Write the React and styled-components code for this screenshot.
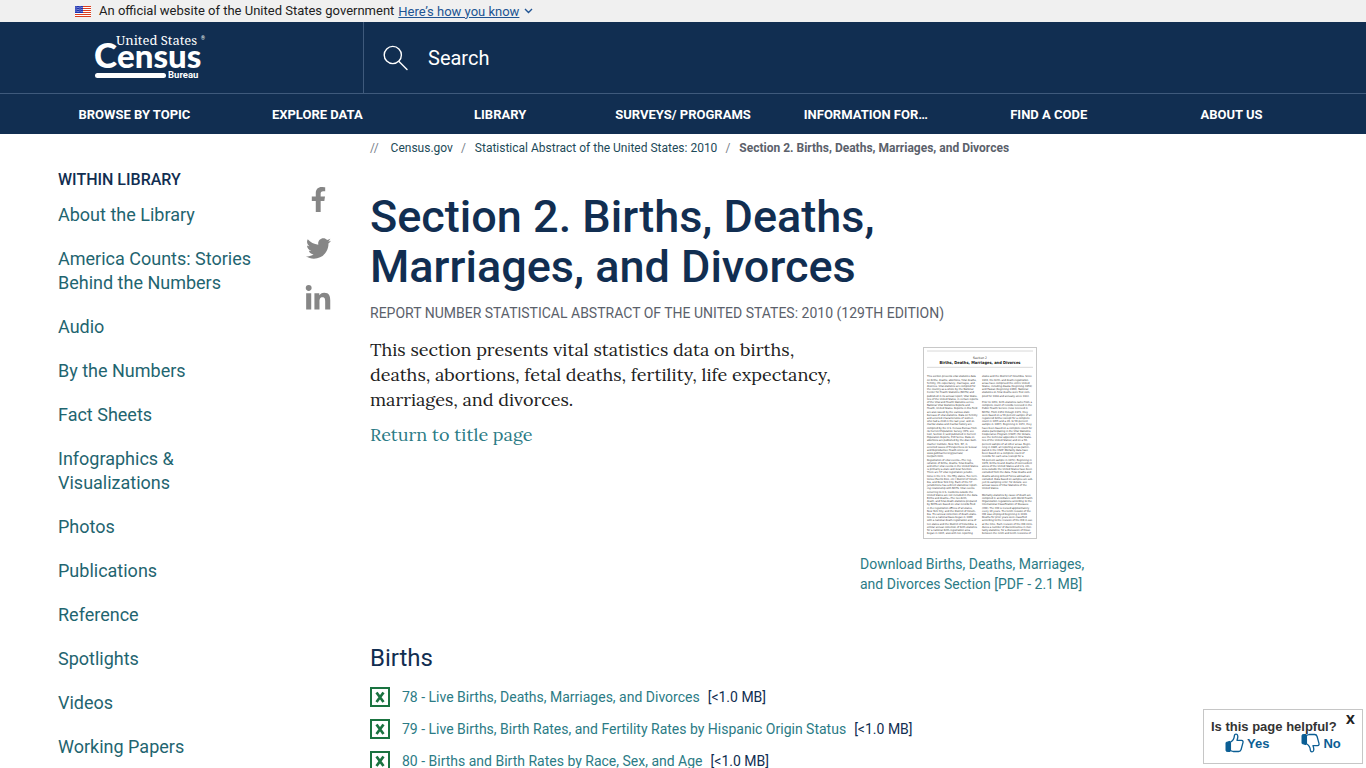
import React, { useState } from "react";
import styled, { createGlobalStyle } from "styled-components";
import { FaFacebookF, FaTwitter, FaLinkedinIn } from "react-icons/fa";

const GlobalStyle = createGlobalStyle`
  * {
    box-sizing: border-box;
  }
  body {
    margin: 0;
    background: #fff;
    color: #112e51;
    font-family: Roboto, "Liberation Sans", sans-serif;
  }
  a {
    text-decoration: none;
  }
  button {
    border: none;
    background: none;
    padding: 0;
    font-family: inherit;
    cursor: pointer;
  }
`;

const Banner = styled.div`
  display: flex;
  align-items: center;
  height: 22px;
  padding-left: 75px;
  background: #f0f0f0;
  color: #212121;
  font-size: 13px;
  line-height: 22px;
`;

const Flag = styled.svg`
  width: 16px;
  height: 11px;
  margin-right: 8px;
`;

const BannerButton = styled.button`
  display: flex;
  align-items: center;
  gap: 5px;
  margin-left: 4px;
  color: #205493;
  font-size: 13px;

  span {
    text-decoration: underline;
  }
`;

const Header = styled.header`
  background: #112e51;
  color: #fff;
`;

const HeaderTop = styled.div`
  display: flex;
  height: 72px;
  border-bottom: 1px solid #3f5a7c;
`;

const LogoLink = styled.a`
  flex: none;
  width: 364px;
  padding: 10px 0 0 90px;
  border-right: 1px solid #3f5a7c;
`;

const SearchLabel = styled.label`
  display: flex;
  flex: 1;
  align-items: center;
  gap: 20px;
  padding-left: 19px;
`;

const SearchInput = styled.input`
  flex: 1;
  padding: 0;
  border: none;
  outline: none;
  background: transparent;
  color: #fff;
  font-family: inherit;
  font-size: 20px;

  &::placeholder {
    color: #fff;
    opacity: 1;
  }
`;

const Nav = styled.nav`
  display: flex;
  height: 40px;
  padding: 0 43px;
`;

const NavLink = styled.a`
  flex: 1 1 0;
  color: #fff;
  font-size: 13px;
  font-weight: 700;
  line-height: 42px;
  text-align: center;
  white-space: nowrap;
`;

const Page = styled.div`
  display: flex;
  align-items: flex-start;
`;

const Sidebar = styled.aside`
  flex: none;
  width: 288px;
  padding: 34px 20px 0 58px;
`;

const SidebarTitle = styled.h2`
  margin: 0 0 11px;
  font-size: 16px;
  font-weight: 500;
  line-height: 24px;
`;

const SidebarList = styled.ul`
  display: flex;
  flex-direction: column;
  gap: 20px;
  margin: 0;
  padding: 0;
  list-style: none;
`;

const SidebarLink = styled.a`
  color: #1f6570;
  font-size: 18px;
  line-height: 24px;
`;

const Social = styled.div`
  display: flex;
  flex: none;
  flex-direction: column;
  align-items: center;
  gap: 24px;
  width: 60px;
  padding-top: 53px;
`;

const SocialLink = styled.a`
  display: flex;
  color: #868686;
  font-size: ${(props) => props.$size || 25}px;
`;

const Main = styled.main`
  flex: 1;
  min-width: 0;
  padding: 4px 20px 20px 22px;
`;

const Crumbs = styled.nav`
  display: flex;
  font-size: 12px;
  line-height: 20px;

  a {
    color: #1d4a59;
  }
  strong {
    color: #5b616b;
  }
`;

const Slash = styled.span`
  margin: 0 ${(props) => (props.$first ? "12px" : "9px")} 0
    ${(props) => (props.$first ? "0" : "8px")};
  color: #79818a;
`;

const Title = styled.h1`
  max-width: 600px;
  margin: 34px 0 0;
  font-size: 45px;
  font-weight: 500;
  line-height: 50px;
`;

const ReportNumber = styled.p`
  margin: 11px 0 0;
  color: #5b616b;
  font-size: 14px;
  line-height: 20px;
`;

const Intro = styled.div`
  display: flex;
  gap: 10px;
  margin-top: 14px;
`;

const IntroText = styled.div`
  flex: none;
  width: 480px;
  color: #212121;
  font-family: Lora, "Liberation Serif", serif;
  font-size: 18px;
  line-height: 25px;

  p {
    margin: 0 0 10px;
  }
  a {
    color: #2b7b85;
  }
`;

const Download = styled.a`
  display: flex;
  flex-direction: column;
  align-items: center;
  gap: 15px;
  width: 240px;
  padding-top: 10px;
  color: #2b7b85;
  font-size: 14px;
  line-height: 20px;
`;

const Thumb = styled.svg`
  width: 114px;
  height: 192px;
  border: 1px solid #c8c8c8;
`;

const SectionTitle = styled.h2`
  margin: 48px 0 7px;
  font-size: 24px;
  font-weight: 400;
  line-height: 32px;
`;

const FileList = styled.ul`
  margin: 0;
  padding: 0;
  list-style: none;
`;

const FileItem = styled.li`
  display: flex;
  align-items: center;
  height: 32px;
  font-size: 14px;

  a {
    margin: 0 8px 0 12px;
    color: #2b7b85;
  }
`;

const Survey = styled.aside`
  position: fixed;
  right: 3px;
  bottom: 4px;
  width: 160px;
  height: 55px;
  padding: 11px 0 0 7px;
  border: 1px solid #c6c6c6;
  background: #fff;
  color: #333;
  font-family: "Liberation Sans", Arial, sans-serif;
  font-size: 13px;
  font-weight: 700;
  line-height: 12px;
`;

const SurveyClose = styled.button`
  position: absolute;
  top: 2px;
  right: 7px;
  color: #222;
  font-family: "DejaVu Sans", sans-serif;
  font-size: 12px;
  font-weight: 700;
  line-height: 16px;
`;

const SurveyAnswers = styled.div`
  display: flex;
  gap: 32px;
  padding-left: 14px;
`;

const Answer = styled.button`
  display: flex;
  align-items: center;
  gap: 3px;
  color: #0b5e94;
  font-size: 13px;
  font-weight: 700;
`;

const navItems = [
  "BROWSE BY TOPIC",
  "EXPLORE DATA",
  "LIBRARY",
  "SURVEYS/ PROGRAMS",
  "INFORMATION FOR…",
  "FIND A CODE",
  "ABOUT US",
];

const libraryLinks = [
  "About the Library",
  "America Counts: Stories Behind the Numbers",
  "Audio",
  "By the Numbers",
  "Fact Sheets",
  "Infographics & Visualizations",
  "Photos",
  "Publications",
  "Reference",
  "Spotlights",
  "Videos",
  "Working Papers",
];

const files = [
  "78 - Live Births, Deaths, Marriages, and Divorces",
  "79 - Live Births, Birth Rates, and Fertility Rates by Hispanic Origin Status",
  "80 - Births and Birth Rates by Race, Sex, and Age",
];

const leftColumn = [
  "This section presents vital statistics data",
  "on births, deaths, abortions, fetal deaths,",
  "fertility, life expectancy, marriages, and",
  "divorces. Vital statistics are compiled for",
  "the country as a whole by the National",
  "Center for Health Statistics (NCHS) and",
  "published in its annual report, Vital Statis-",
  "tics of the United States, in certain reports",
  "of the Vital and Health Statistics series,",
  "National Vital Statistics Reports and",
  "Health, United States. Reports in this field",
  "are also issued by the various state",
  "bureaus of vital statistics. Data on fertility",
  "and selected characteristics of women",
  "who had a child in the last year, and on",
  "marital status and marital history are",
  "compiled by the U.S. Census Bureau from",
  "its Current Population Survey (CPS; see",
  "text, Section 1) and published in Current",
  "Population Reports, P20 Series. Data on",
  "abortions are published by the Alan Gutt-",
  "macher Institute, New York, NY, in",
  "selected issues of Perspectives on Sexual",
  "and Reproductive Health online at",
  "www.guttmacher.org/journals/",
  "toc/psrh.html.",
  "Registration of vital events—The reg-",
  "istration of births, deaths, fetal deaths,",
  "and other vital events in the United States",
  "is primarily a state and local function.",
  "There are 57 vital registration jurisdic-",
  "tions in the U.S.: the fifty states, five terri-",
  "tories (Puerto Rico, etc.) District of Colum-",
  "bia, and New York City. Each of the 57",
  "jurisdictions has a direct statistical report-",
  "ing relationship with NCHS. Vital events",
  "occurring to U.S. residents outside the",
  "United States are not included in the data.",
  "Births and deaths—The live-birth,",
  "death, and fetal-death statistics prepared",
  "by NCHS are based on vital records filed",
  "in the registration offices of all states,",
  "New York City, and the District of Colum-",
  "bia. The annual collection of death statis-",
  "tics on a national basis began in 1900",
  "with a national death-registration area of",
  "ten states and the District of Columbia; a",
  "similar annual collection of birth statistics",
  "for a national birth-registration area",
  "began in 1915, also with ten reporting",
];

const rightColumn = [
  "states and the District of Columbia. Since",
  "1933, the birth- and death-registration",
  "areas have comprised the entire United",
  "States, including Alaska (beginning 1959)",
  "and Hawaii (beginning 1960). National",
  "statistics on fetal deaths were first com-",
  "piled for 1918 and annually since 1922.",
  "",
  "Prior to 1951, birth statistics came from a",
  "complete count of records received in the",
  "Public Health Service (now received in",
  "NCHS). From 1951 through 1971, they",
  "were based on a 50-percent sample of all",
  "registered births (except for a complete",
  "count in 1955 and a 20- to 50-percent",
  "sample in 1967). Beginning in 1972, they",
  "have been based on a complete count for",
  "states participating in the Vital Statistics",
  "Cooperative Program (VSCP) (for details,",
  "see the technical appendix in Vital Statis-",
  "tics of the United States) and on a 50-",
  "percent sample of all other areas. Begin-",
  "ning in 1986, all reporting areas partici-",
  "pated in the VSCP. Mortality data have",
  "been based on a complete count of",
  "records for each area (except for a",
  "50-percent sample in 1972). Beginning in",
  "1970, births to and deaths of nonresident",
  "aliens of the United States and U.S. citi-",
  "zens outside the United States have been",
  "excluded from the data. Fetal deaths and",
  "deaths among Armed Forces abroad are",
  "excluded. Data based on samples are sub-",
  "ject to sampling error; for details, see",
  "annual issues of Vital Statistics of the",
  "United States.",
  "",
  "Mortality statistics by cause of death are",
  "compiled in accordance with World Health",
  "Organization regulations according to the",
  "International Classification of Diseases",
  "(ICD). The ICD is revised approximately",
  "every 10 years. The tenth revision of the",
  "ICD was employed beginning in 1999.",
  "Deaths for prior years were classified",
  "according to the revision of the ICD in use",
  "at the time. Each revision of the ICD intro-",
  "duces a number of discontinuities in mor-",
  "tality statistics; for a discussion of those",
  "between the ninth and tenth revisions of",
];

const FlagIcon = () => (
  <Flag viewBox="0 0 16 11" aria-hidden="true">
    <rect width="16" height="11" fill="#fff" />
    {[0, 2, 4, 6, 8, 10].map((y) => (
      <rect key={y} y={y} width="16" height="1" fill="#db3e1f" />
    ))}
    <rect width="8" height="7" fill="#1e33b1" />
    {[1, 3, 5].map((y) =>
      [1, 3, 5, 7].map((x) => (
        <circle key={`${x}-${y}`} cx={x} cy={y + (x % 4 === 1 ? 0 : 0.6)} r="0.5" fill="#fff" />
      ))
    )}
  </Flag>
);

const Logo = () => (
  <svg width="124" height="60" viewBox="0 0 124 60" fill="#fff" role="img" aria-label="United States Census Bureau">
    <text x="26" y="13" fontFamily="'Roboto Slab', 'Noto Serif', 'Liberation Serif', serif" fontSize="13">
      United States
    </text>
    <text x="111" y="8" fontFamily="Roboto, sans-serif" fontSize="5">
      ®
    </text>
    <text x="4" y="36" fontFamily="Lato, sans-serif" fontSize="33" fontWeight="900">
      <tspan fontSize="35">C</tspan>ensus
    </text>
    <rect x="5" y="41" width="71" height="5" rx="2.5" />
    <text x="78" y="46" fontFamily="Roboto, sans-serif" fontSize="9.5" fontWeight="700">
      Bureau
    </text>
  </svg>
);

const SearchIcon = () => (
  <svg width="25" height="26" viewBox="0 0 25 26" fill="none" stroke="#fff" strokeWidth="1.4" strokeLinecap="round">
    <circle cx="9.8" cy="10" r="8.6" />
    <path d="M16 16.4 24 24.6" />
  </svg>
);

const ExcelIcon = () => (
  <svg width="20" height="20" viewBox="0 0 20 20" fill="none" stroke="#1a7340" aria-hidden="true">
    <rect x="1" y="1" width="18" height="18" strokeWidth="2" />
    <path d="M6.5 5.5 13.5 15M13.5 5.5 6.5 15" strokeWidth="2.7" />
  </svg>
);

const ThumbIcon = ({ down }) => (
  <svg width="19" height="20" viewBox="0 0 19 20" aria-hidden="true">
    <g transform={down ? "matrix(1 0 0 -1 0 20)" : undefined}>
      <path d="M1 9.5 5 8.3v10.2H2.2C1.4 18.5 1 18 1 17.2z" fill="#0b5e94" stroke="#0b5e94" />
      <path
        d="M5.4 9.2C8 7.8 9.2 5.6 9.4 2.6 9.6.8 12.4.6 12.8 3c.2 1.6-.3 3-.8 4.3h4.6c1.5 0 1.7 1.4 1.3 2.6l-1.8 6.6c-.4 1.5-1.2 2-2.5 2H8.2L5.4 17.6z"
        fill="#fff"
        stroke="#0b5e94"
        strokeWidth="1.3"
        strokeLinejoin="round"
      />
    </g>
  </svg>
);

const DocumentPreview = () => (
  <Thumb viewBox="0 0 336 570" fontFamily="'DejaVu Sans Condensed', 'DejaVu Sans', sans-serif" fill="#333" aria-hidden="true">
    <path d="M9 9H327M9 58H327" stroke="#c4c4c4" strokeWidth="2" />
    <text x="168" y="32" fontSize="10" textAnchor="middle">
      Section 2
    </text>
    <text x="168" y="48" fontSize="12" fontWeight="700" textAnchor="middle" fill="#111">
      Births, Deaths, Marriages, and Divorces
    </text>
    {[leftColumn, rightColumn].map((lines, column) =>
      lines.map((line, i) => (
        <text key={`${column}-${i}`} x={column ? 174 : 9} y={88 + i * 9.6} fontSize="8">
          {line}
        </text>
      ))
    )}
  </Thumb>
);

const App = () => {
  const [query, setQuery] = useState("");
  const [surveyOpen, setSurveyOpen] = useState(true);

  return (
    <>
      <GlobalStyle />
      <Banner>
        <FlagIcon />
        An official website of the United States government
        <BannerButton type="button">
          <span>Here’s how you know</span>
          <svg width="9" height="6" viewBox="0 0 9 6" fill="none" stroke="#205493" strokeWidth="1.4">
            <path d="M1 1 4.5 4.5 8 1" />
          </svg>
        </BannerButton>
      </Banner>
      <Header>
        <HeaderTop>
          <LogoLink href="#home">
            <Logo />
          </LogoLink>
          <SearchLabel>
            <SearchIcon />
            <SearchInput
              type="text"
              aria-label="Search"
              placeholder="Search"
              value={query}
              onChange={(e) => setQuery(e.target.value)}
            />
          </SearchLabel>
        </HeaderTop>
        <Nav>
          {navItems.map((item) => (
            <NavLink key={item} href="#nav">
              {item}
            </NavLink>
          ))}
        </Nav>
      </Header>
      <Page>
        <Sidebar>
          <SidebarTitle>WITHIN LIBRARY</SidebarTitle>
          <SidebarList>
            {libraryLinks.map((item) => (
              <li key={item}>
                <SidebarLink href="#library">{item}</SidebarLink>
              </li>
            ))}
          </SidebarList>
        </Sidebar>
        <Social>
          <SocialLink href="#facebook" aria-label="Facebook">
            <FaFacebookF />
          </SocialLink>
          <SocialLink href="#twitter" aria-label="Twitter">
            <FaTwitter />
          </SocialLink>
          <SocialLink href="#linkedin" aria-label="LinkedIn" $size={28}>
            <FaLinkedinIn />
          </SocialLink>
        </Social>
        <Main>
          <Crumbs aria-label="Breadcrumb">
            <Slash $first>//</Slash>
            <a href="#census">Census.gov</a>
            <Slash>/</Slash>
            <a href="#abstract">Statistical Abstract of the United States: 2010</a>
            <Slash>/</Slash>
            <strong>Section 2. Births, Deaths, Marriages, and Divorces</strong>
          </Crumbs>
          <Title>Section 2. Births, Deaths, Marriages, and Divorces</Title>
          <ReportNumber>
            REPORT NUMBER STATISTICAL ABSTRACT OF THE UNITED STATES: 2010 (129TH EDITION)
          </ReportNumber>
          <Intro>
            <IntroText>
              <p>
                This section presents vital statistics data on births, deaths, abortions, fetal
                deaths, fertility, life expectancy, marriages, and divorces.
              </p>
              <a href="#title-page">Return to title page</a>
            </IntroText>
            <Download href="#download">
              <DocumentPreview />
              <span>Download Births, Deaths, Marriages, and Divorces Section [PDF - 2.1 MB]</span>
            </Download>
          </Intro>
          <SectionTitle>Births</SectionTitle>
          <FileList>
            {files.map((file) => (
              <FileItem key={file}>
                <ExcelIcon />
                <a href="#file">{file}</a>
                [&lt;1.0 MB]
              </FileItem>
            ))}
          </FileList>
        </Main>
      </Page>
      {surveyOpen && (
        <Survey>
          Is this page helpful?
          <SurveyClose type="button" aria-label="Close" onClick={() => setSurveyOpen(false)}>
            X
          </SurveyClose>
          <SurveyAnswers>
            <Answer type="button">
              <ThumbIcon />
              Yes
            </Answer>
            <Answer type="button">
              <ThumbIcon down />
              No
            </Answer>
          </SurveyAnswers>
        </Survey>
      )}
    </>
  );
};

export default App;
